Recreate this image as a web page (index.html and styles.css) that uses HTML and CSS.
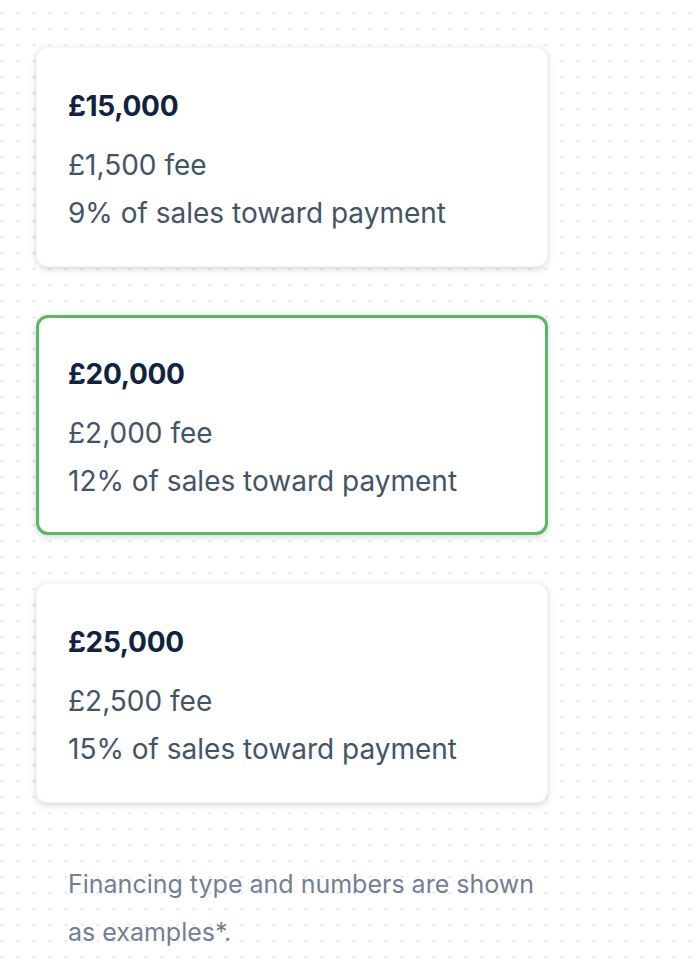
FILE: index.html
```html
<!DOCTYPE html>
<html lang="en">
<head>
  <meta charset="UTF-8">
  <title>Financing offers</title>
  <link rel="stylesheet" href="styles.css">
</head>
<body>

  <div class="offers">
    <div class="offer">
      <div class="offer-amount">£15,000</div>
      <div class="offer-line">£1,500 fee</div>
      <div class="offer-line">9% of sales toward payment</div>
    </div>

    <div class="offer selected">
      <div class="offer-amount">£20,000</div>
      <div class="offer-line">£2,000 fee</div>
      <div class="offer-line">12% of sales toward payment</div>
    </div>

    <div class="offer">
      <div class="offer-amount">£25,000</div>
      <div class="offer-line">£2,500 fee</div>
      <div class="offer-line">15% of sales toward payment</div>
    </div>

    <p class="note">Financing type and numbers are shown as examples*.</p>
  </div>

</body>
</html>
```

FILE: styles.css
```css
* {
  box-sizing: border-box;
}

body {
  font-family: Inter, 'Noto Sans', sans-serif;
  margin: 0;
  background-color: #ffffff;
  background-image: radial-gradient(circle, #eceef2 1.4px, transparent 1.8px);
  background-size: 16px 16px;
  background-position: -6px 5px;
  min-height: 964px;
}

.offers {
  width: 548px;
  padding: 47px 0 0 36px;
  display: flex;
  flex-direction: column;
  gap: 48px;
}

.offer {
  background: #ffffff;
  border: 1px solid rgba(15, 35, 65, 0.05);
  border-radius: 12px;
  padding: 42px 31px 29px;
  box-shadow: 0 2px 7px rgba(15, 35, 65, 0.18);
}

.offer.selected {
  border: 3px solid #58b863;
  padding: 40px 29px 27px;
}

.offer-amount {
  font-size: 28px;
  line-height: 32px;
  font-weight: 700;
  letter-spacing: -0.3px;
  color: #10233f;
  margin-bottom: 19px;
}

.offer-line {
  font-size: 28px;
  line-height: 48px;
  color: #425466;
}

.note {
  margin: 0;
  padding: 9px 0 0 32px;
  font-size: 25px;
  line-height: 48px;
  color: #727f94;
}
```
